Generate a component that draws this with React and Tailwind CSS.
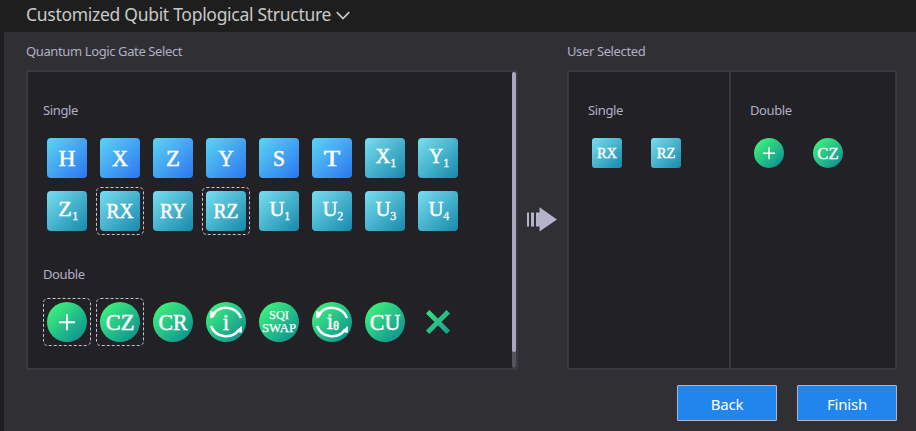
import React from 'react';

const SERIF = '"Liberation Serif", "Times New Roman", serif';

const BLUE = ['#58cdf3', '#2f7df0'];
const TEAL = ['#70d8ec', '#1f8fb0'];
const GREEN = ['#40f57b', '#0c8f92'];

const SINGLE = [
  { id: 'H', w: 17, tone: BLUE },
  { id: 'X', w: 16, tone: BLUE },
  { id: 'Z', w: 14, tone: BLUE },
  { id: 'Y', w: 15.5, tone: BLUE },
  { id: 'S', w: 12, tone: BLUE },
  { id: 'T', w: 16.5, tone: BLUE },
  { id: 'X', sub: '1', w: 15, tone: TEAL },
  { id: 'Y', sub: '1', w: 14, tone: TEAL },
  { id: 'Z', sub: '1', w: 13.5, tone: TEAL },
  { id: 'RX', w: 27, tone: TEAL, selected: true },
  { id: 'RY', w: 26, tone: TEAL },
  { id: 'RZ', w: 25, tone: TEAL, selected: true },
  { id: 'U', sub: '1', w: 15, tone: TEAL },
  { id: 'U', sub: '2', w: 15, tone: TEAL },
  { id: 'U', sub: '3', w: 15, tone: TEAL },
  { id: 'U', sub: '4', w: 15, tone: TEAL },
];

const DOUBLE = [
  { id: 'plus', selected: true },
  { id: 'CZ', w: 28.5, selected: true },
  { id: 'CR', w: 29 },
  { id: 'iswap' },
  { id: 'sqiswap' },
  { id: 'itheta' },
  { id: 'CU', w: 30.5 },
  { id: 'cross' },
];

function Gradient({ id, tone }) {
  return (
    <linearGradient id={id} gradientUnits="userSpaceOnUse" x1="3" y1="3" x2="37" y2="37">
      <stop offset="0" stopColor={tone[0]} />
      <stop offset="1" stopColor={tone[1]} />
    </linearGradient>
  );
}

function Glyph({ x, y, size, w, weight = 0.5, children }) {
  return (
    <text
      x={x}
      y={y}
      fontSize={size}
      textLength={w}
      lengthAdjust="spacingAndGlyphs"
      textAnchor="middle"
      fill="#fff"
      stroke="#fff"
      strokeWidth={weight}
      fontFamily={SERIF}
    >
      {children}
    </text>
  );
}

function SingleGate({ gate, size = 40 }) {
  const gid = React.useId();
  const pair = gate.id.length === 2;
  return (
    <svg width={size} height={size} viewBox="0 0 40 40" className="block">
      <defs><Gradient id={gid} tone={gate.tone} /></defs>
      <rect width="40" height="40" rx="4" fill={`url(#${gid})`} />
      {gate.sub ? (
        <>
          <Glyph x={18} y={25.3} size={22} w={gate.w}>{gate.id}</Glyph>
          <Glyph x={28.3} y={28.5} size={13} w={6} weight={0.3}>{gate.sub}</Glyph>
        </>
      ) : (
        <Glyph x={20} y={pair ? 26.8 : 27.8} size={pair ? 20.8 : 23.8} w={gate.w}>{gate.id}</Glyph>
      )}
    </svg>
  );
}

function SwapArrows() {
  return (
    <g fill="none" stroke="#fff" strokeWidth="2.6">
      <path d="M7 12.2 A16 15.5 0 0 1 35 16" />
      <path d="M5 24 A16 15.5 0 0 0 33 27.8" />
      <path d="M4.2 9.2 L4.2 16.2 L7.4 15.6 L10.6 10.2 Z M35.8 23.8 L35.8 30.8 L32.2 30.2 L29.8 29.6 Z" fill="#fff" stroke="none" />
    </g>
  );
}

function DoubleGate({ gate, size = 40 }) {
  const gid = React.useId();
  const fill = `url(#${gid})`;
  return (
    <svg width={size} height={size} viewBox="0 0 40 40" className="block">
      <defs><Gradient id={gid} tone={GREEN} /></defs>
      {gate.id === 'cross' ? (
        <path d="M9.7 9.7 L30.3 30.3 M30.3 9.7 L9.7 30.3" stroke={fill} strokeWidth="4.8" fill="none" />
      ) : (
        <circle cx="20" cy="20" r="20" fill={fill} />
      )}
      {gate.id === 'plus' && <path d="M12 20.3 H28 M20 12.3 V28.3" stroke="#fff" strokeWidth="1.9" />}
      {gate.w && <Glyph x={20} y={27.8} size={23} w={gate.w}>{gate.id}</Glyph>}
      {gate.id === 'iswap' && (
        <>
          <SwapArrows />
          <Glyph x={20} y={28} size={23} w={6.4}>i</Glyph>
        </>
      )}
      {gate.id === 'itheta' && (
        <>
          <SwapArrows />
          <Glyph x={18} y={27} size={23} w={6.4}>i</Glyph>
          <Glyph x={24} y={28.4} size={11.5} w={5.6}>θ</Glyph>
        </>
      )}
      {gate.id === 'sqiswap' && (
        <>
          <Glyph x={20} y={17.4} size={12.5} w={20} weight={0.25}>SQI</Glyph>
          <Glyph x={20} y={29.7} size={12.5} w={34} weight={0.25}>SWAP</Glyph>
        </>
      )}
    </svg>
  );
}

function Slot({ selected, children }) {
  return (
    <div className="relative size-10">
      {children}
      {selected && (
        <svg width="48" height="48" className="absolute -left-1 -top-1">
          <rect x="0.5" y="0.5" width="47" height="47" rx="4" fill="none" stroke="#c4c2d4" strokeDasharray="3 2" />
        </svg>
      )}
    </div>
  );
}

function Label({ children }) {
  return <div className="h-5 whitespace-nowrap text-[13px] leading-5 tracking-[-0.38px]">{children}</div>;
}

function ActionButton({ children }) {
  return (
    <button className="h-9 w-[100px] rounded-[1px] border border-[#b5b3c8] bg-[#2185ee] pt-[2px] text-[15px] leading-none tracking-[-0.2px] text-white">
      {children}
    </button>
  );
}

export default function App() {
  return (
    <div className="flex h-[431px] w-[916px] flex-col overflow-hidden bg-[#1e1e1e] font-['Noto_Sans','Open_Sans',sans-serif] text-[#b2b0c6]">
      <header className="flex h-8 shrink-0 items-center pb-1 pl-[26px] text-[#c9c9c9]">
        <h1 className="w-[305px] whitespace-nowrap text-[17.5px] leading-7 tracking-[-0.29px]">Customized Qubit Toplogical Structure</h1>
        <svg width="14" height="10" viewBox="0 0 14 10" className="ml-[5px] mt-[4px]" fill="none" stroke="#c9c9c9" strokeWidth="1.7">
          <path d="M0.8 1.2 L7 7.6 L13.2 1.2" />
        </svg>
      </header>
      <main className="ml-1 flex-1 bg-[#302f34] pl-[22px] pr-[19px] pt-[9px]">
        <div className="flex">
          <section className="w-[492px]">
            <Label>Quantum Logic Gate Select</Label>
            <div className="mt-[9px] flex h-[300px] justify-between border-2 border-[#3a393f] bg-[#222126]">
              <div className="pl-[15px] pt-7">
                <Label>Single</Label>
                <div className="ml-1 mt-[18px] grid grid-cols-8 gap-[13px]">
                  {SINGLE.map((g, i) => (
                    <Slot key={i} selected={g.selected}><SingleGate gate={g} /></Slot>
                  ))}
                </div>
                <div className="mt-[33px]"><Label>Double</Label></div>
                <div className="ml-1 mt-[18px] grid grid-cols-8 gap-[13px]">
                  {DOUBLE.map((g) => (
                    <Slot key={g.id} selected={g.selected}><DoubleGate gate={g} /></Slot>
                  ))}
                </div>
              </div>
              <div className="h-full w-1 rounded-sm bg-[#55545a]">
                <div className="h-[280px] rounded-sm bg-[#a9a7bd]" />
              </div>
            </div>
          </section>
          <div className="flex w-[49px] pl-[9px] pt-[166px]">
            <svg width="30" height="25" viewBox="0 0 30 25" fill="#b5b3cc">
              <path d="M0 5.5 H2 V19.5 H0 Z M4 5.5 H7 V19.5 H4 Z M9 5.5 H12.5 V0.3 L30 12.4 L12.5 24.6 V19.5 H9 Z" />
            </svg>
          </div>
          <section className="w-[330px]">
            <Label>User Selected</Label>
            <div className="mt-[9px] flex h-[300px] border-2 border-[#3a393f] bg-[#222126]">
              <div className="w-[162px] border-r-2 border-[#3a393f] pl-[19px] pt-7">
                <Label>Single</Label>
                <div className="ml-1 mt-[18px] flex gap-[29px]">
                  <SingleGate gate={SINGLE[9]} size={30} />
                  <SingleGate gate={SINGLE[11]} size={30} />
                </div>
              </div>
              <div className="pl-[19px] pt-7">
                <Label>Double</Label>
                <div className="ml-1 mt-[18px] flex gap-[29px]">
                  <DoubleGate gate={DOUBLE[0]} size={30} />
                  <DoubleGate gate={DOUBLE[1]} size={30} />
                </div>
              </div>
            </div>
          </section>
        </div>
        <div className="mt-[15px] flex justify-end gap-5">
          <ActionButton>Back</ActionButton>
          <ActionButton>Finish</ActionButton>
        </div>
      </main>
    </div>
  );
}
